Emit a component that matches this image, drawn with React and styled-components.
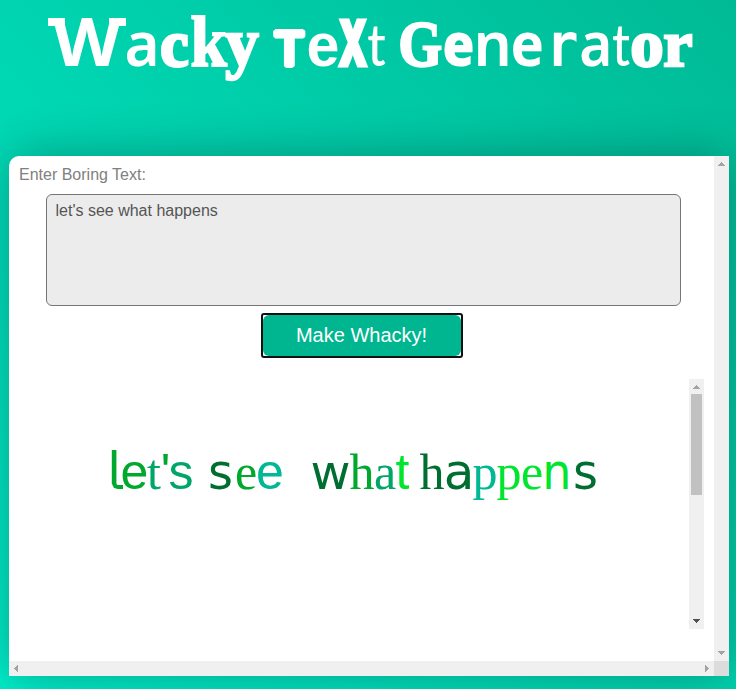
import React from 'react';
import styled, { createGlobalStyle, css } from 'styled-components';

const GlobalStyle = createGlobalStyle`
  * { box-sizing: border-box; }
  html, body, #root { height: 100%; }
  body {
    margin: 0;
    overflow: hidden;
    font-family: "Liberation Sans", Arial, sans-serif;
    font-size: 16px;
  }
`;

const Page = styled.div`
  height: 100%;
  padding: 0 7px 13px 9px;
  overflow: hidden;
  background: linear-gradient(45deg, #00edca 0%, #00ba95 100%);
`;

const Title = styled.h1`
  display: flex;
  align-items: baseline;
  height: 156px;
  margin: 0;
  padding: 1px 0 0 39px;
  color: #fff;
  font-weight: 400;
`;

const Letter = styled.span`
  position: relative;
  display: flex;
  justify-content: center;
  flex: none;
  width: ${(p) => p.$w}px;
  margin-left: ${(p) => p.$gap || 0}px;
  font-family: ${(p) => p.$font}, sans-serif;
  font-size: ${(p) => p.$size}px;
  font-weight: ${(p) => p.$weight || 400};
  line-height: 79px;
  color: ${(p) => p.$color || 'inherit'};
  white-space: pre;
  ${(p) => p.$stroke && css`-webkit-text-stroke: ${p.$stroke}px currentColor;`}
  ${(p) => p.$round && css`
    text-shadow: 2px 0 #fff, -2px 0 #fff, 0 2px #fff, 0 -2px #fff,
      1.4px 1.4px #fff, -1.4px 1.4px #fff, 1.4px -1.4px #fff, -1.4px -1.4px #fff;
  `}
  ${(p) => p.$slab && css`
    &::before, &::after {
      content: '';
      position: absolute;
      top: 17px;
      left: 0;
      width: 17px;
      height: 8px;
      background: currentColor;
    }
    &::after { left: auto; right: 0; }
  `}
  ${(p) => p.$tail && css`
    &::after {
      content: '';
      position: absolute;
      left: 1px;
      bottom: 22px;
      width: 7px;
      height: 10px;
      border-left: 4px solid currentColor;
      border-bottom: 4px solid currentColor;
      border-bottom-left-radius: 6px;
    }
  `}
`;

const Glyph = styled.span`
  display: block;
  transform: translateX(${(p) => p.$shift || 0}px) scaleX(${(p) => p.$scale || 1});
  ${(p) => p.$clip && css`clip-path: inset(0 0 ${p.$clip}px 0);`}
`;

const Card = styled.main`
  display: grid;
  grid-template-columns: 1fr 15px;
  grid-template-rows: 1fr 15px;
  width: 720px;
  height: 520px;
  background: #fff;
  border-top-left-radius: 10px;
  box-shadow: 0 0 50px rgba(0, 0, 0, 0.3);
`;

const Content = styled.section`
  padding: 9px 10px 0;
`;

const Label = styled.label`
  display: block;
  height: 29px;
  line-height: 19px;
  color: #808080;
`;

const Input = styled.textarea`
  display: block;
  width: 635px;
  height: 112px;
  margin-left: 27px;
  padding: 7px 8.5px;
  border: 1px solid #767676;
  border-radius: 6px;
  outline: none;
  resize: none;
  background: #ececec;
  color: #555;
  font: 16px/18px "Liberation Sans", Arial, sans-serif;
`;

const FocusRing = styled.div`
  width: 202px;
  height: 45px;
  margin: 7px 0 0 242px;
  border: 2px solid #101010;
  border-radius: 3px;
`;

const Button = styled.button`
  display: block;
  width: 198px;
  height: 41px;
  padding: 0 1px 0 0;
  border: 0;
  border-radius: 6px;
  background: #00b690;
  color: #fff;
  font: 20px/39px "Liberation Sans", Arial, sans-serif;
`;

const Output = styled.div`
  display: flex;
  justify-content: space-between;
  height: 250px;
  margin-top: 21px;
`;

const Phrase = styled.div`
  display: flex;
  align-items: baseline;
  height: 88px;
  padding: 53px 0 0 92px;
`;

const Track = styled.div`
  display: flex;
  flex-direction: ${(p) => (p.$horizontal ? 'row' : 'column')};
  align-items: center;
  justify-content: space-between;
  width: ${(p) => (p.$horizontal ? 'auto' : '15px')};
  height: ${(p) => (p.$horizontal ? '15px' : 'auto')};
  background: #f0f0f0;
`;

const Thumb = styled.div`
  width: 11px;
  height: 101px;
  margin-bottom: auto;
  background: #c1c1c1;
`;

const Corner = styled.div`
  background: #dcdcdc;
`;

const ArrowBox = styled.svg`
  display: block;
  flex: none;
  width: 15px;
  height: 15px;
  fill: ${(p) => (p.$dark ? '#505050' : '#a3a3a3')};
  shape-rendering: crispEdges;
`;

const arrows = {
  up: 'M4 10V9H5V8H6V7H7V6H8V7H9V8H10V9H11V10Z',
  down: 'M4 5V6H5V7H6V8H7V9H8V8H9V7H10V6H11V5Z',
  left: 'M9 4H8V5H7V6H6V7H5V8H6V9H7V10H8V11H9Z',
  right: 'M6 4H7V5H8V6H9V7H10V8H9V9H8V10H7V11H6Z',
};

const Arrow = ({ to, dark }) => (
  <ArrowBox viewBox="0 0 15 15" $dark={dark} aria-hidden="true">
    <path d={arrows[to]} />
  </ArrowBox>
);

const sans = '"Liberation Sans"';
const serif = '"Liberation Serif"';
const dejavu = '"DejaVu Sans"';
const noto = '"Noto Sans"';
const open = '"Open Sans"';

const titleLetters = [
  { ch: 'W', w: 78, size: 66, font: noto, weight: 700, scale: 1.07, slab: true },
  { ch: 'a', w: 30, gap: 1, size: 62, font: noto, weight: 600, scale: 0.97 },
  { ch: 'c', w: 31, gap: 2, size: 65, font: serif, weight: 700, stroke: 3, scale: 0.98 },
  { ch: 'k', w: 37, size: 71, font: serif, weight: 700, stroke: 2, scale: 0.92 },
  { ch: 'y', w: 34, gap: -2, size: 67, font: serif, weight: 700, stroke: 2.5 },
  { ch: 'T', w: 33, gap: 14, size: 50, font: sans, weight: 700, stroke: 2, round: true, scale: 0.96 },
  { ch: 'e', w: 31, gap: 1, size: 61, font: sans, weight: 700, scale: 0.97 },
  { ch: 'X', w: 30, size: 63, font: 'Inter', weight: 900, scale: 0.59, stroke: 3 },
  { ch: 't', w: 18, gap: -1, size: 58, font: 'Lato', weight: 500, scale: 0.88 },
  { ch: 'G', w: 43, gap: 15, size: 65, font: serif, weight: 700, stroke: 2.5, scale: 0.86, shift: -1 },
  { ch: 'e', w: 30, gap: 1, size: 61, font: open, weight: 800, scale: 0.86, shift: -0.5 },
  { ch: 'n', w: 30, gap: 4, size: 62, font: noto, weight: 600, scale: 0.97 },
  { ch: 'e', w: 30, gap: 5, size: 61, font: noto, weight: 700, scale: 0.92, shift: -1 },
  { ch: 'r', w: 27, gap: 9, size: 61, font: '"DejaVu Sans Mono"', weight: 700, scale: 0.88, shift: -3 },
  { ch: 'a', w: 28, gap: 3, size: 61, font: noto, weight: 600, scale: 0.93 },
  { ch: 't', w: 18, gap: 2, size: 58, font: 'Lato', weight: 500, scale: 0.86, shift: -0.5 },
  { ch: 'o', w: 34, gap: 1, size: 66, font: serif, weight: 700, stroke: 3, shift: -1 },
  { ch: 'r', w: 32, gap: -1, size: 66, font: serif, weight: 700, stroke: 2.5, shift: -2 },
];

const phraseLetters = [
  { ch: 'l', w: 9, size: 51, font: dejavu, color: '#00a82d', shift: -1.5, tail: true, clip: 27 },
  { ch: 'e', w: 24, gap: 2, size: 50, font: sans, color: '#00a82d', shift: 0.5 },
  { ch: 't', w: 14, gap: 1, size: 50, font: serif, color: '#00a568' },
  { ch: "'", w: 5, gap: 2, size: 50, font: sans, color: '#00a82d' },
  { ch: 's', w: 22, gap: 2, size: 50, font: sans, color: '#00a568' },
  { ch: 's', w: 21, gap: 18, size: 50, font: dejavu, color: '#006e31', shift: 0.5, scale: 0.96 },
  { ch: 'e', w: 19, gap: 6, size: 50, font: serif, color: '#00a82d', shift: -0.5 },
  { ch: 'e', w: 24, gap: 2, size: 50, font: sans, color: '#00b894' },
  { ch: 'w', w: 37, gap: 30, size: 48, font: dejavu, color: '#006e31', scale: 1.02 },
  { ch: 'h', w: 22, gap: 1, size: 50, font: serif, color: '#00a82d', shift: 1 },
  { ch: 'a', w: 20, gap: 2, size: 50, font: serif, color: '#00a568', shift: 1 },
  { ch: 't', w: 13, gap: 1, size: 50, font: sans, color: '#00e62e', shift: 1 },
  { ch: 'h', w: 23, gap: 11, size: 50, font: serif, color: '#006e31', shift: 1.5 },
  { ch: 'a', w: 23, gap: 4, size: 50, font: dejavu, color: '#006e31', shift: 1.5 },
  { ch: 'p', w: 23, gap: 3, size: 50, font: serif, color: '#00b894', shift: 1.5 },
  { ch: 'p', w: 23, gap: 1, size: 50, font: serif, color: '#00e62e', shift: 1.5 },
  { ch: 'e', w: 20, gap: 2, size: 50, font: serif, color: '#00e62e', shift: 1 },
  { ch: 'n', w: 21, gap: 5, size: 50, font: dejavu, color: '#00e62e', scale: 0.92 },
  { ch: 's', w: 21, gap: 8, size: 50, font: dejavu, color: '#006e31', shift: 0.5, scale: 0.96 },
];

const WackyText = ({ letters }) =>
  letters.map((l, i) => (
    <Letter
      key={i}
      $w={l.w}
      $gap={l.gap}
      $size={l.size}
      $font={l.font}
      $weight={l.weight}
      $color={l.color}
      $stroke={l.stroke}
      $round={l.round}
      $slab={l.slab}
      $tail={l.tail}
    >
      <Glyph $scale={l.scale} $shift={l.shift} $clip={l.clip}>{l.ch}</Glyph>
    </Letter>
  ));

export default function App() {
  return (
    <Page>
      <GlobalStyle />
      <Title>
        <WackyText letters={titleLetters} />
      </Title>
      <Card>
        <Content>
          <Label htmlFor="boring">Enter Boring Text:</Label>
          <Input id="boring" defaultValue="let's see what happens" spellCheck={false} />
          <FocusRing>
            <Button>Make Whacky!</Button>
          </FocusRing>
          <Output>
            <Phrase>
              <WackyText letters={phraseLetters} />
            </Phrase>
            <Track>
              <Arrow to="up" />
              <Thumb />
              <Arrow to="down" dark />
            </Track>
          </Output>
        </Content>
        <Track>
          <Arrow to="up" />
          <Arrow to="down" />
        </Track>
        <Track $horizontal>
          <Arrow to="left" />
          <Arrow to="right" />
        </Track>
        <Corner />
      </Card>
    </Page>
  );
}
